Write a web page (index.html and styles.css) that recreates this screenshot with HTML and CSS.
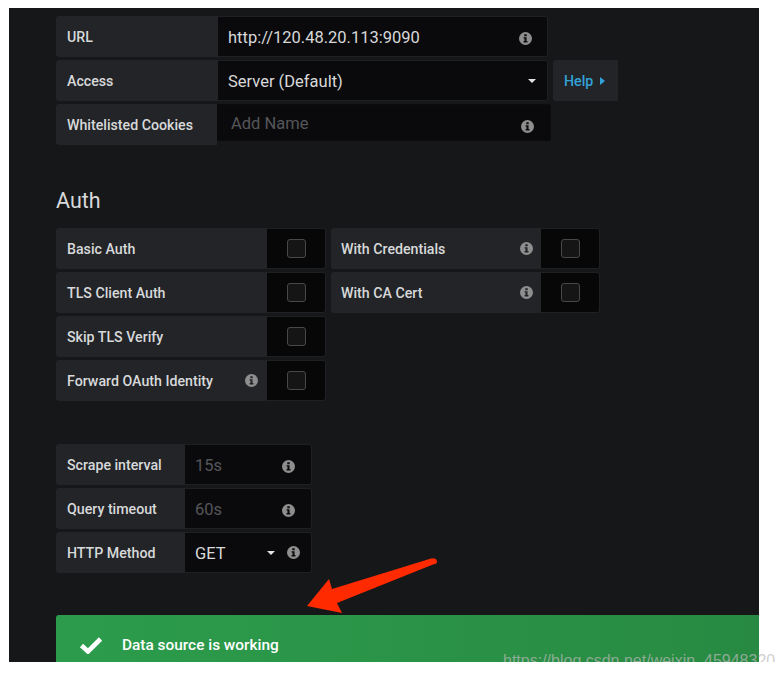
FILE: index.html
```html
<!DOCTYPE html>
<html lang="en">

<head>
    <meta charset="UTF-8">
    <meta name="viewport" content="width=device-width, initial-scale=1.0">
    <title>Data source settings</title>
    <link rel="stylesheet" href="styles.css">
</head>

<body>
    <svg class="icon-defs" width="0" height="0">
        <symbol id="info" viewBox="0 0 14 14">
            <path fill-rule="evenodd" d="M7 0a7 7 0 1 1 0 14A7 7 0 0 1 7 0zM5.700 2.400v2.100h2.600V2.400zM4.900 5.600v1.500h1v2.600h-1v1.700h4.200V9.700h-1V5.600z"/>
        </symbol>
    </svg>

    <div class="panel">
        <!-- HTTP -->
        <div class="row">
            <div class="label label-url">URL</div>
            <div class="field field-url">
                <span class="value">http://120.48.20.113:9090</span>
                <svg class="info info-url"><use href="#info"></use></svg>
            </div>
        </div>
        <div class="row">
            <div class="label label-url">Access</div>
            <div class="field field-access">
                <span class="value">Server (Default)</span>
                <span class="caret"></span>
            </div>
            <div class="help">Help <span class="help-caret"></span></div>
        </div>
        <div class="row">
            <div class="label label-cookies">Whitelisted Cookies</div>
            <div class="field field-cookies">
                <span class="value placeholder">Add Name</span>
                <svg class="info info-cookies"><use href="#info"></use></svg>
            </div>
        </div>

        <h3 class="section-title">Auth</h3>
        <div class="auth">
            <div class="auth-col">
                <div class="row">
                    <div class="label label-check">Basic Auth</div>
                    <div class="check-cell"><span class="check"></span></div>
                </div>
                <div class="row">
                    <div class="label label-check">TLS Client Auth</div>
                    <div class="check-cell"><span class="check"></span></div>
                </div>
                <div class="row">
                    <div class="label label-check">Skip TLS Verify</div>
                    <div class="check-cell"><span class="check"></span></div>
                </div>
                <div class="row">
                    <div class="label label-check">Forward OAuth Identity
                        <svg class="info"><use href="#info"></use></svg>
                    </div>
                    <div class="check-cell"><span class="check"></span></div>
                </div>
            </div>
            <div class="auth-col">
                <div class="row">
                    <div class="label label-check label-narrow">With Credentials
                        <svg class="info"><use href="#info"></use></svg>
                    </div>
                    <div class="check-cell"><span class="check"></span></div>
                </div>
                <div class="row">
                    <div class="label label-check label-narrow">With CA Cert
                        <svg class="info"><use href="#info"></use></svg>
                    </div>
                    <div class="check-cell"><span class="check"></span></div>
                </div>
            </div>
        </div>

        <!-- Prometheus settings -->
        <div class="timing">
            <div class="row">
                <div class="label label-timing">Scrape interval</div>
                <div class="field field-timing">
                    <span class="value placeholder">15s</span>
                    <svg class="info info-timing"><use href="#info"></use></svg>
                </div>
            </div>
            <div class="row">
                <div class="label label-timing">Query timeout</div>
                <div class="field field-timing">
                    <span class="value placeholder">60s</span>
                    <svg class="info info-timing"><use href="#info"></use></svg>
                </div>
            </div>
            <div class="row">
                <div class="label label-timing">HTTP Method</div>
                <div class="field field-method">
                    <span class="value">GET</span>
                    <span class="caret caret-method"></span>
                    <svg class="info"><use href="#info"></use></svg>
                </div>
            </div>
        </div>

        <div class="alert">
            <svg class="alert-check" viewBox="0 0 24 18"><path d="M2.500 9.500l6.500 6L21.500 3" fill="none" stroke="#fff" stroke-width="4.600"/></svg>
            <span>Data source is working</span>
        </div>

        <!-- annotation on top of the screenshot -->
        <svg class="arrow" viewBox="0 0 140 60" width="140" height="60">
            <path d="M1 49L23 22L26 32L125 1.500Q130 0.500 131 4Q131.500 7 127 7.500L31 46L36 56z" fill="#ff2a00"/>
        </svg>
    </div>

    <div class="watermark">https://blog.csdn.net/weixin_45948320</div>
</body>

</html>
```

FILE: styles.css
```css
body {
    font-family: Roboto, "Liberation Sans", sans-serif;
    margin: 0;
    padding: 0;
    background-color: #fff;
    position: relative;
}

.icon-defs {
    position: absolute;
}

.panel {
    position: relative;
    box-sizing: border-box;
    width: 750px;
    height: 654px;
    margin: 8px 0 0 9px;
    padding: 8px 0 0 47px;
    background-color: #161719;
    overflow: hidden;
}

.row {
    display: flex;
    height: 41px;
    margin-bottom: 3px;
}

.label {
    display: flex;
    align-items: center;
    box-sizing: border-box;
    padding-left: 11px;
    background-color: #222428;
    color: #d8d9da;
    font-size: 14.2px;
    font-weight: 500;
    border-radius: 3px 0 0 3px;
}

.label-url {
    width: 162px;
}

.label-cookies {
    width: 161px;
}

.label-check {
    width: 211px;
    padding-right: 9px;
    justify-content: space-between;
}

.label-narrow {
    width: 210px;
    padding-left: 10px;
    padding-right: 8px;
}

.label-timing {
    width: 129px;
}

.field {
    display: flex;
    align-items: center;
    box-sizing: border-box;
    padding: 0 9px 0 10px;
    background-color: #0a0a0c;
    border: 1px solid #1f2023;
    border-left: 0;
    border-radius: 0 3px 3px 0;
    color: #d8d9da;
    font-size: 16.5px;
}

.field-url {
    width: 330px;
    padding-right: 15px;
}

.field-access {
    width: 330px;
    padding-right: 11px;
}

.field-cookies {
    width: 334px;
    height: 37px;
    padding: 0 16px 0 14px;
    border-color: #0c0c0e;
}

.field-timing {
    width: 127px;
    padding-right: 16px;
}

.field-method {
    width: 127px;
    padding-right: 11px;
}

.value {
    flex: 1;
    padding-top: 2px;
}

.placeholder {
    color: #55565a;
}

.info {
    width: 13px;
    height: 13px;
    fill: #8e8e8e;
    flex: none;
}

.info-url {
    margin-top: 3px;
}

.info-cookies {
    margin-top: 8px;
}

.info-timing {
    margin-top: 3px;
}

.caret {
    width: 0;
    height: 0;
    border-left: 4.5px solid transparent;
    border-right: 4.5px solid transparent;
    border-top: 4.5px solid #e3e3e3;
}

.caret-method {
    margin-right: 12px;
}

.help {
    display: flex;
    align-items: center;
    gap: 7px;
    box-sizing: border-box;
    width: 65px;
    margin-left: 5px;
    padding-left: 11px;
    background-color: #222428;
    color: #33a2d8;
    font-size: 14.2px;
    font-weight: 500;
    border-radius: 3px 0 0 3px;
}

.help-caret {
    width: 0;
    height: 0;
    border-top: 4px solid transparent;
    border-bottom: 4px solid transparent;
    border-left: 5px solid #33a2d8;
}

.section-title {
    margin: 41px 0 12px;
    color: #d8d9da;
    font-size: 21.5px;
    font-weight: 400;
    line-height: 30px;
}

.auth {
    display: flex;
    gap: 5px;
}

.check-cell {
    display: flex;
    align-items: center;
    justify-content: center;
    width: 59px;
    background-color: #070708;
    border: 1px solid #1f2023;
    border-left: 0;
    border-radius: 0 3px 3px 0;
    box-sizing: border-box;
}

.check {
    box-sizing: border-box;
    width: 19px;
    height: 19px;
    background-color: #151515;
    border: 1px solid #47484b;
    border-radius: 3px;
}

.timing {
    margin-top: 40px;
}

.alert {
    display: flex;
    align-items: center;
    gap: 19px;
    height: 60px;
    margin-top: 42px;
    padding-left: 23px;
    background: linear-gradient(90deg, #2c9c4c, #288a42);
    border-radius: 3px 0 0 3px;
    color: #fff;
    font-size: 15.4px;
    font-weight: 500;
}

.alert-check {
    width: 24px;
    height: 18px;
}

.arrow {
    position: absolute;
    left: 297px;
    top: 549px;
}

.watermark {
    position: absolute;
    left: 503px;
    top: 652px;
    color: rgba(185, 185, 185, 0.7);
    font-family: "Liberation Sans", sans-serif;
    font-size: 16px;
    white-space: nowrap;
}
```
